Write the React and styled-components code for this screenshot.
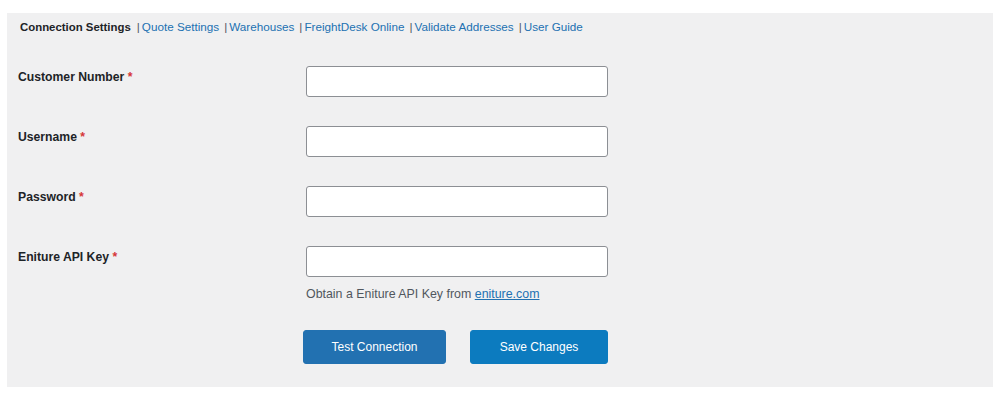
import styled, { createGlobalStyle } from 'styled-components';

const GlobalStyle = createGlobalStyle`
  body {
    margin: 0;
    background: #fff;
    font-family: 'Liberation Sans', Arial, sans-serif;
  }
`;

const tabs = ['Quote Settings', 'Warehouses', 'FreightDesk Online', 'Validate Addresses', 'User Guide'];

const fields = [
  { label: 'Customer Number', type: 'text' },
  { label: 'Username', type: 'text' },
  { label: 'Password', type: 'password' },
  { label: 'Eniture API Key', type: 'text', help: true },
];

export default function App() {
  return (
    <>
      <GlobalStyle />
      <Page>
        <Panel>
          <Tabs>
            <ActiveTab>Connection Settings</ActiveTab>
            {tabs.map((t) => (
              <TabItem key={t}>
                <Sep>|</Sep>
                <TabLink href="#">{t}</TabLink>
              </TabItem>
            ))}
          </Tabs>

          <Form>
            {fields.map((f) => (
              <Row key={f.label}>
                <Label>
                  {f.label} <Required>*</Required>
                </Label>
                <Field>
                  <Input type={f.type} />
                  {f.help && (
                    <Help>
                      Obtain a Eniture API Key from <HelpLink href="#">eniture.com</HelpLink>
                    </Help>
                  )}
                </Field>
              </Row>
            ))}
          </Form>

          <Actions>
            <Button $tone="#2271b1" $width="143px">Test Connection</Button>
            <Button $tone="#0c7bbf" $width="138px">Save Changes</Button>
          </Actions>
        </Panel>
      </Page>
    </>
  );
}

const Page = styled.div`
  padding: 13px 7px 14px 7px;
`;

const Panel = styled.div`
  background: #f0f0f1;
  height: 374px;
  box-sizing: border-box;
  padding: 6px 0 0 11px;
`;

const Tabs = styled.div`
  display: flex;
  align-items: center;
  font-size: 11.7px;
  line-height: 16px;
  padding-left: 2px;
`;

const ActiveTab = styled.span`
  font-weight: bold;
  font-size: 11.4px;
  color: #1d2327;
  margin-right: 6px;
`;

const TabItem = styled.span`
  display: inline-flex;
  align-items: center;
  margin-right: 5px;
`;

const Sep = styled.span`
  color: #50575e;
  margin-right: 2px;
`;

const TabLink = styled.a`
  color: #2271b1;
  text-decoration: none;
`;

const Form = styled.div`
  display: flex;
  flex-direction: column;
  gap: 29px;
  margin-top: 31px;
`;

const Row = styled.div`
  display: flex;
  align-items: flex-start;
`;

const Label = styled.div`
  width: 288px;
  font-size: 12.2px;
  font-weight: bold;
  color: #1d2327;
  line-height: 16px;
  padding-top: 3px;
`;

const Required = styled.span`
  color: #d63638;
`;

const Field = styled.div`
  display: flex;
  flex-direction: column;
`;

const Input = styled.input`
  width: 302px;
  height: 31px;
  box-sizing: border-box;
  border: 1px solid #8c8f94;
  border-radius: 3px;
  background: #fff;
  margin: 0;
  padding: 0 8px;
  font-size: 14px;
`;

const Help = styled.p`
  margin: 8px 0 0 0;
  font-size: 12.4px;
  line-height: 18px;
  color: #50575e;
`;

const HelpLink = styled.a`
  color: #2271b1;
  text-decoration: underline;
`;

const Actions = styled.div`
  display: flex;
  gap: 24px;
  margin: 27px 0 0 285px;
`;

const Button = styled.button`
  width: ${(p) => p.$width};
  height: 34px;
  background: ${(p) => p.$tone};
  border: 1px solid ${(p) => p.$tone};
  border-radius: 3px;
  color: #fff;
  font-family: 'Liberation Sans', Arial, sans-serif;
  font-size: 12px;
  cursor: pointer;
`;
